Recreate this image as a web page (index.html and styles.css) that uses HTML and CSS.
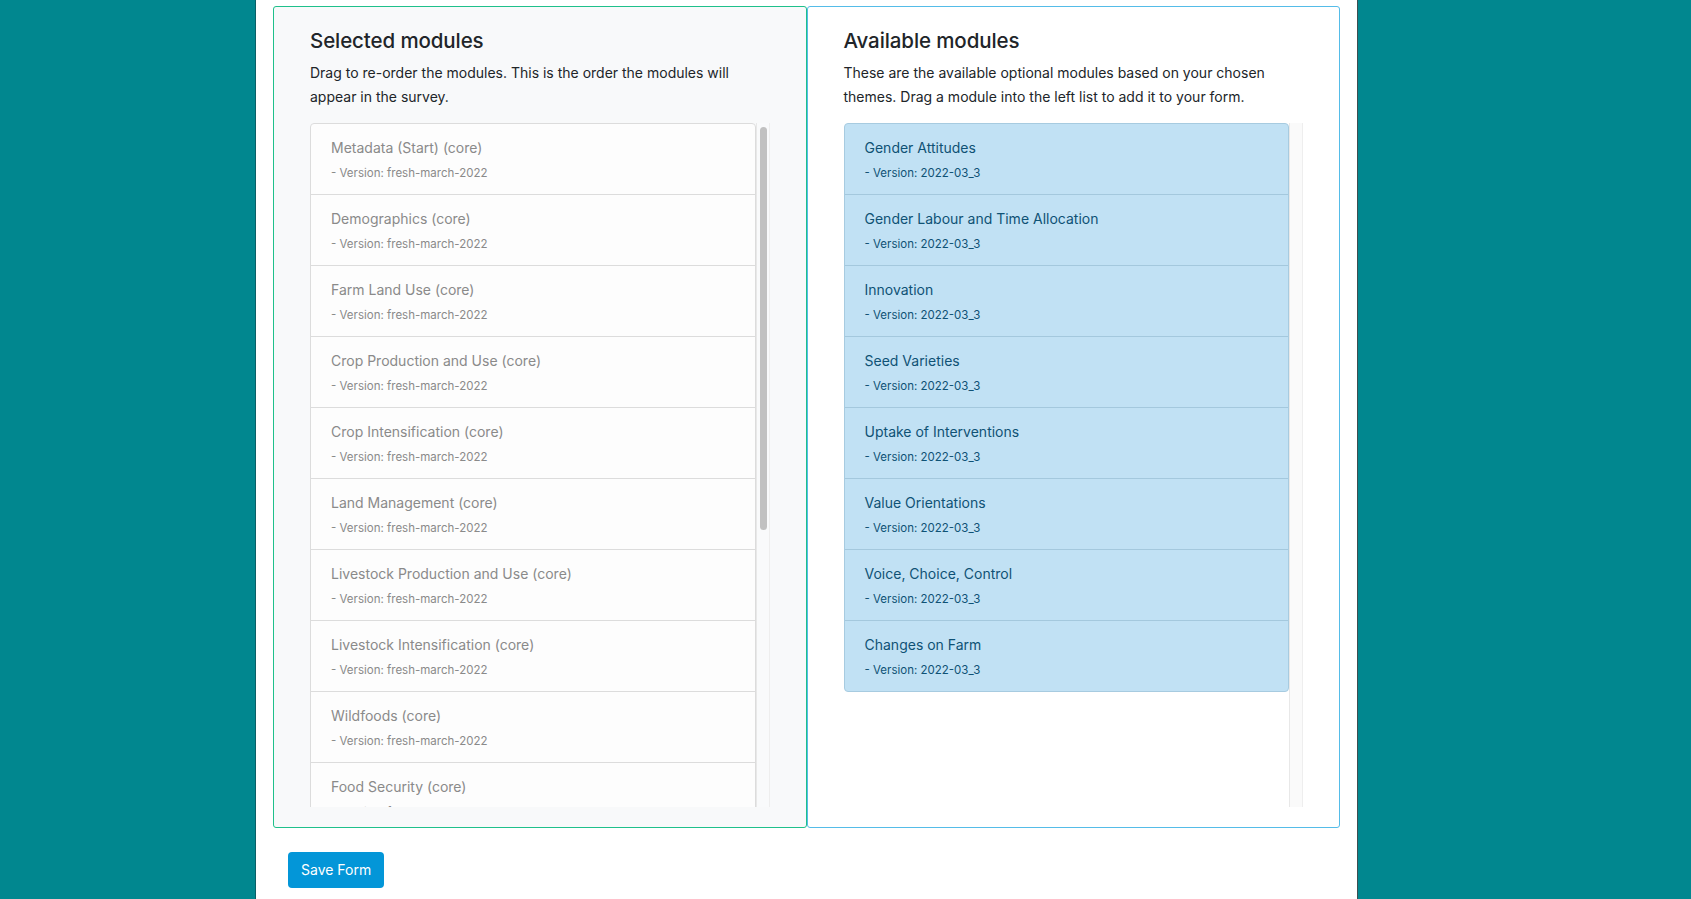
FILE: index.html
```html
<!DOCTYPE html>
<html lang="en">
<head>
<meta charset="utf-8">
<title>Form modules</title>
<link rel="stylesheet" href="styles.css">
</head>
<body>
<div class="page">
  <div class="panels">
    <section class="panel panel-selected">
      <h2 class="panel-title">Selected modules</h2>
      <p class="panel-desc">Drag to re-order the modules. This is the order the modules will appear in the survey.</p>
      <div class="list-area">
        <div class="list-clip">
          <ul class="list list-core">
            <li class="item"><div class="item-name">Metadata (Start) (core)</div><div class="item-ver">- Version: fresh-march-2022</div></li>
            <li class="item"><div class="item-name">Demographics (core)</div><div class="item-ver">- Version: fresh-march-2022</div></li>
            <li class="item"><div class="item-name">Farm Land Use (core)</div><div class="item-ver">- Version: fresh-march-2022</div></li>
            <li class="item"><div class="item-name">Crop Production and Use (core)</div><div class="item-ver">- Version: fresh-march-2022</div></li>
            <li class="item"><div class="item-name">Crop Intensification (core)</div><div class="item-ver">- Version: fresh-march-2022</div></li>
            <li class="item"><div class="item-name">Land Management (core)</div><div class="item-ver">- Version: fresh-march-2022</div></li>
            <li class="item"><div class="item-name">Livestock Production and Use (core)</div><div class="item-ver">- Version: fresh-march-2022</div></li>
            <li class="item"><div class="item-name">Livestock Intensification (core)</div><div class="item-ver">- Version: fresh-march-2022</div></li>
            <li class="item"><div class="item-name">Wildfoods (core)</div><div class="item-ver">- Version: fresh-march-2022</div></li>
            <li class="item"><div class="item-name">Food Security (core)</div><div class="item-ver">- Version: fresh-march-2022</div></li>
          </ul>
        </div>
        <div class="track"><div class="thumb"></div></div>
      </div>
    </section>
    <section class="panel panel-available">
      <h2 class="panel-title">Available modules</h2>
      <p class="panel-desc">These are the available optional modules based on your chosen themes. Drag a module into the left list to add it to your form.</p>
      <div class="list-area">
        <div class="list-clip">
          <ul class="list list-optional">
            <li class="item"><div class="item-name">Gender Attitudes</div><div class="item-ver">- Version: 2022-03_3</div></li>
            <li class="item"><div class="item-name">Gender Labour and Time Allocation</div><div class="item-ver">- Version: 2022-03_3</div></li>
            <li class="item"><div class="item-name">Innovation</div><div class="item-ver">- Version: 2022-03_3</div></li>
            <li class="item"><div class="item-name">Seed Varieties</div><div class="item-ver">- Version: 2022-03_3</div></li>
            <li class="item"><div class="item-name">Uptake of Interventions</div><div class="item-ver">- Version: 2022-03_3</div></li>
            <li class="item"><div class="item-name">Value Orientations</div><div class="item-ver">- Version: 2022-03_3</div></li>
            <li class="item"><div class="item-name">Voice, Choice, Control</div><div class="item-ver">- Version: 2022-03_3</div></li>
            <li class="item"><div class="item-name">Changes on Farm</div><div class="item-ver">- Version: 2022-03_3</div></li>
          </ul>
        </div>
        <div class="track track-empty"></div>
      </div>
    </section>
  </div>
  <div class="actions">
    <button class="btn-save" type="button">Save Form</button>
  </div>
</div>
</body>
</html>
```

FILE: styles.css
```css
* { box-sizing: border-box; }

html, body {
  margin: 0;
  padding: 0;
  height: 100%;
}

body {
  background: #01878f;
  font-family: Inter, "Noto Sans", "Liberation Sans", sans-serif;
  color: #212529;
  overflow: hidden;
}

.page {
  margin-left: 256px;
  width: 1101px;
  min-height: 100%;
  background: #ffffff;
  padding: 6px 17px 0;
  box-shadow: -1px 0 0 #0a5f66, 1px 0 0 #3d4f52;
}

.panels {
  display: flex;
}

.panel {
  flex: 1 1 0;
  height: 822px;
  padding: 21px 36px 20px;
  border: 1px solid;
  border-radius: 3px;
  display: flex;
  flex-direction: column;
}

.panel-selected {
  background: #f8f9fa;
  border-color: #1fc08b;
}

.panel-available {
  background: #ffffff;
  border-color: #55bce8;
}

.panel-title {
  margin: 0 0 8px;
  font-size: 20.5px;
  line-height: 25px;
  font-weight: 500;
  letter-spacing: -0.1px;
  color: #212529;
}

.panel-desc {
  margin: 0 0 14px;
  font-size: 14px;
  line-height: 24px;
  color: #212529;
}

.list-area {
  flex: 1 1 auto;
  min-height: 0;
  display: flex;
}

.list-clip {
  flex: 1 1 auto;
  min-width: 0;
  overflow: hidden;
}

.track {
  flex: 0 0 14px;
  background: #fafafa;
  border-left: 1px solid #e8e8e8;
  border-right: 1px solid #eeeeee;
  padding: 4px 2px 0 3px;
}

.panel-selected .track {
  background: #f9fafb;
}

.thumb {
  height: 403px;
  background: #c1c1c1;
  border-radius: 4px;
}

.list {
  list-style: none;
  margin: 0;
  padding: 0;
  border-radius: 4px;
  overflow: hidden;
}

.item {
  padding: 12px 20px;
  border-bottom: 1px solid;
}

.item:last-child {
  border-bottom: 0;
}

.item-name {
  font-size: 14px;
  line-height: 24px;
}

.item-ver {
  margin-top: 4px;
  font-size: 11.5px;
  line-height: 18px;
}

.list-core {
  border: 1px solid #dcdcdc;
  background: #fdfdfd;
  color: #8a8a8a;
}

.list-core .item {
  border-bottom-color: #dcdcdc;
}

.list-optional {
  border: 1px solid #a7cbe0;
  background: #c1e1f4;
  color: #0f5275;
}

.list-optional .item {
  border-bottom-color: #a4c8dd;
}

.actions {
  padding: 24px 15px;
}

.btn-save {
  height: 36px;
  padding: 0 13px;
  border: 0;
  border-radius: 4px;
  background: #0396d8;
  color: #ffffff;
  font-family: inherit;
  font-size: 14px;
  line-height: 24px;
}
```
